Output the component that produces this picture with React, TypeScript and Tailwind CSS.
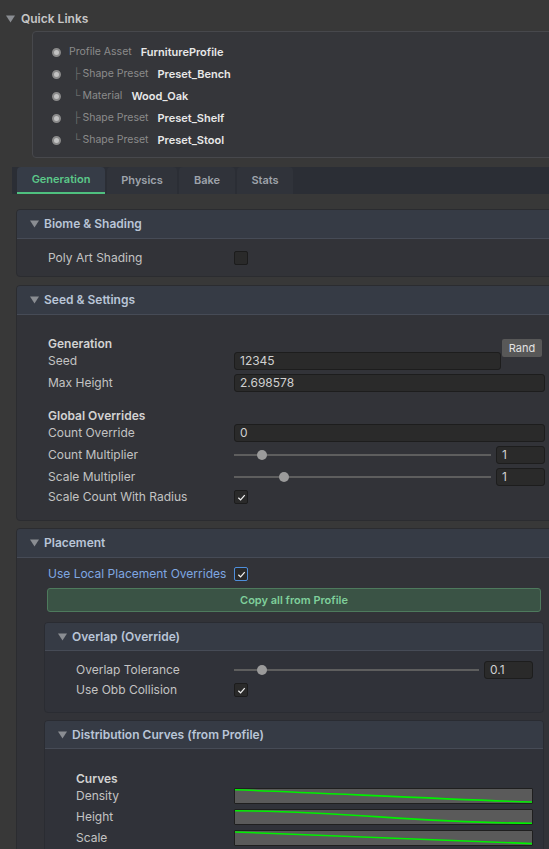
import type { ReactNode } from "react";

const FONT = { fontFamily: "Inter, 'Noto Sans', 'Liberation Sans', sans-serif" };

function Tri({ className = "" }: { className?: string }) {
  return (
    <svg viewBox="0 0 9 8" className={`w-[9px] h-[8px] shrink-0 ${className}`}>
      <path d="M0 0.5 H9 L4.5 7.5 Z" fill="#8a8d92" />
    </svg>
  );
}

function Check({ blue = false, on = true }: { blue?: boolean; on?: boolean }) {
  return (
    <div
      className={`w-[14px] h-[14px] rounded-[2px] bg-[#2a2a2a] border flex items-center justify-center ${
        blue ? "border-[#4f8fdc]" : "border-[#1c1c1c]"
      }`}
    >
      {on && (
        <svg viewBox="0 0 10 10" className="w-[9px] h-[9px]">
          <path d="M1.5 5.2 L4 7.6 L8.6 2.3" fill="none" stroke="#f0f0f0" strokeWidth="1.4" />
        </svg>
      )}
    </div>
  );
}

function Field({ value, className = "" }: { value: string; className?: string }) {
  return (
    <div
      className={`h-[18px] rounded-[3px] bg-[#2a2a2a] border border-[#1d1d1d] pl-[5px] flex items-center text-[12px] text-[#d0d0d0] ${className}`}
    >
      {value}
    </div>
  );
}

function Slider({ pos, value }: { pos: number; value: string }) {
  return (
    <div className="flex items-center h-[18px] gap-[5px]">
      <div className="relative flex-1 h-[2px] bg-[#5e5e5e]">
        <div
          className="absolute top-[-4px] w-[10px] h-[10px] rounded-full bg-[#9b9b9b]"
          style={{ left: `calc(${pos * 100}% - 5px)` }}
        />
      </div>
      <Field value={value} className="w-[49px]" />
    </div>
  );
}

function Row({ label, w, children, h = "h-[18px]", blue = false }: { label: string; w: string; children?: ReactNode; h?: string; blue?: boolean }) {
  return (
    <div className={`flex items-center ${h}`}>
      <span className={`${w} shrink-0 text-[12px] ${blue ? "text-[#7fa7e2]" : "text-[#c3c3c3]"}`}>{label}</span>
      <div className="flex-1">{children}</div>
    </div>
  );
}

function Section({ title, children, inner = false, className = "" }: { title: string; children: ReactNode; inner?: boolean; className?: string }) {
  return (
    <div
      className={`rounded-[4px] border overflow-hidden ${
        inner ? "border-[#2a2c32] bg-[#303239]" : "border-[#2b2c30] bg-[#323338]"
      } ${className}`}
    >
      <div
        className={`${inner ? "h-[28px]" : "h-[29px]"} flex items-center pl-[13px] gap-[5px] bg-[#363b45] border-b border-[#464b56]`}
      >
        <Tri />
        <span className="text-[12px] font-semibold text-[#b9c5d7]">{title}</span>
      </div>
      {children}
    </div>
  );
}

function Curve({ d }: { d: string }) {
  return (
    <div className="h-[16px] bg-[#5a5a5a] border border-[#1f1f1f] rounded-[1px] overflow-hidden">
      <svg viewBox="0 0 296 14" preserveAspectRatio="none" className="w-full h-full block">
        <path d={d} fill="none" stroke="#00f000" strokeWidth="1.6" />
      </svg>
    </div>
  );
}

const LINKS = [
  { tree: "", label: "Profile Asset", value: "FurnitureProfile" },
  { tree: "├", label: "Shape Preset", value: "Preset_Bench" },
  { tree: "└", label: "Material", value: "Wood_Oak" },
  { tree: "├", label: "Shape Preset", value: "Preset_Shelf" },
  { tree: "└", label: "Shape Preset", value: "Preset_Stool" },
];

const TABS = [
  { name: "Generation", w: "w-[88px]" },
  { name: "Physics", w: "w-[70px]" },
  { name: "Bake", w: "w-[56px]" },
  { name: "Stats", w: "w-[56px]" },
];

export default function App() {
  return (
    <div className="w-[549px] h-[849px] overflow-hidden bg-[#383838] pt-[10px]" style={FONT}>
      {/* Quick Links */}
      <div className="h-[17px] flex items-center pl-[6px] gap-[6px]">
        <Tri />
        <span className="text-[12px] font-semibold text-[#c6c6c6]">Quick Links</span>
      </div>
      <div className="ml-[32px] mt-[4px] w-[540px] h-[127px] rounded-[4px] border border-[#47484c] bg-[#35363a] pt-[9px] pl-[19px]">
        {LINKS.map((l, i) => (
          <div key={i} className="h-[22px] flex items-center">
            <span className="w-[9px] h-[9px] rounded-full bg-[#c2c2c2] border-2 border-[#8a8a8a] shrink-0" />
            <span className="ml-[8px] text-[10.5px] text-[#8b8b8b] flex items-center">
              {l.tree && <span className="text-[#6c6c6c] ml-[4px] mr-[2px]">{l.tree}</span>}
              {l.label}
            </span>
            <span className="ml-[9px] text-[11px] font-semibold text-[#e8e8e8]">{l.value}</span>
          </div>
        ))}
      </div>

      {/* Tabs */}
      <div className="ml-[12px] mt-[9px] h-[27px] bg-[#2b2e35] pl-[5px] flex gap-[2px]">
        {TABS.map((t, i) => (
          <div
            key={t.name}
            className={`${t.w} h-[27px] rounded-t-[4px] flex items-center justify-center text-[11px] font-semibold ${
              i === 0
                ? "bg-[#363c47] text-[#5cc98a] border-b-2 border-[#4fc07f]"
                : "bg-[#30333a] text-[#9ea3ab]"
            }`}
          >
            {t.name}
          </div>
        ))}
      </div>

      {/* Biome & Shading */}
      <Section title="Biome & Shading" className="ml-[16px] mt-[15px] w-[560px]">
        <div className="h-[37px] pl-[31px] flex items-center">
          <Row label="Poly Art Shading" w="w-[186px]">
            <Check on={false} />
          </Row>
        </div>
      </Section>

      {/* Seed & Settings */}
      <Section title="Seed & Settings" className="ml-[16px] mt-[8px] w-[560px]">
        <div className="pl-[31px] pt-[20px] pb-[16px] w-[528px]">
          <div className="h-[17px] flex items-center text-[12px] font-semibold text-[#d2d2d2]">Generation</div>
          <div className="relative">
            <Row label="Seed" w="w-[186px]">
              <Field value="12345" className="w-[267px]" />
            </Row>
            <div className="absolute top-[-13px] left-[454px] w-[40px] h-[18px] rounded-[2px] bg-[#585858] text-[11px] text-[#e2e2e2] flex items-center justify-center">
              Rand
            </div>
          </div>
          <div className="mt-[4px]">
            <Row label="Max Height" w="w-[186px]">
              <Field value="2.698578" />
            </Row>
          </div>
          <div className="mt-[15px] h-[17px] flex items-center text-[12px] font-semibold text-[#d2d2d2]">Global Overrides</div>
          <Row label="Count Override" w="w-[186px]">
            <Field value="0" />
          </Row>
          <div className="mt-[4px]">
            <Row label="Count Multiplier" w="w-[186px]">
              <Slider pos={0.108} value="1" />
            </Row>
          </div>
          <div className="mt-[4px]">
            <Row label="Scale Multiplier" w="w-[186px]">
              <Slider pos={0.195} value="1" />
            </Row>
          </div>
          <div className="mt-[4px]">
            <Row label="Scale Count With Radius" w="w-[186px]" h="h-[14px]">
              <Check />
            </Row>
          </div>
        </div>
      </Section>

      {/* Placement */}
      <Section title="Placement" className="ml-[16px] mt-[7px] w-[560px]">
        <div className="pt-[9px] pb-[20px]">
          <div className="pl-[31px]">
            <Row label="Use Local Placement Overrides" w="w-[186px]" h="h-[14px]" blue>
              <Check blue />
            </Row>
          </div>
          <div className="ml-[30px] mt-[7px] w-[494px] h-[24px] rounded-[3px] bg-[#3a5345] border border-[#4e7a5d] flex items-center justify-center text-[11px] font-semibold text-[#7fcf9b]">
            Copy all from Profile
          </div>

          <Section title="Overlap (Override)" inner className="ml-[27px] mt-[10px] w-[500px]">
            <div className="pl-[31px] pr-[10px] pt-[10px] pb-[15px]">
              <Row label="Overlap Tolerance" w="w-[158px]">
                <Slider pos={0.115} value="0.1" />
              </Row>
              <div className="mt-[4px]">
                <Row label="Use Obb Collision" w="w-[158px]" h="h-[14px]">
                  <Check />
                </Row>
              </div>
            </div>
          </Section>

          <Section title="Distribution Curves (from Profile)" inner className="ml-[27px] mt-[7px] w-[500px]">
            <div className="pl-[31px] pr-[10px] pt-[22px] pb-[15px]">
              <div className="h-[16px] flex items-center text-[12px] font-semibold text-[#d2d2d2]">Curves</div>
              <div className="mt-[1px]">
                <Row label="Density" w="w-[158px]" h="h-[16px]">
                  <Curve d="M0 0.8 C 80 3.5, 200 10, 296 13" />
                </Row>
              </div>
              <div className="mt-[5px]">
                <Row label="Height" w="w-[158px]" h="h-[16px]">
                  <Curve d="M0 0.8 C 120 1.5, 170 12.5, 296 13.2" />
                </Row>
              </div>
              <div className="mt-[5px]">
                <Row label="Scale" w="w-[158px]" h="h-[16px]">
                  <Curve d="M0 1 L 296 12.6" />
                </Row>
              </div>
            </div>
          </Section>
        </div>
      </Section>
    </div>
  );
}
